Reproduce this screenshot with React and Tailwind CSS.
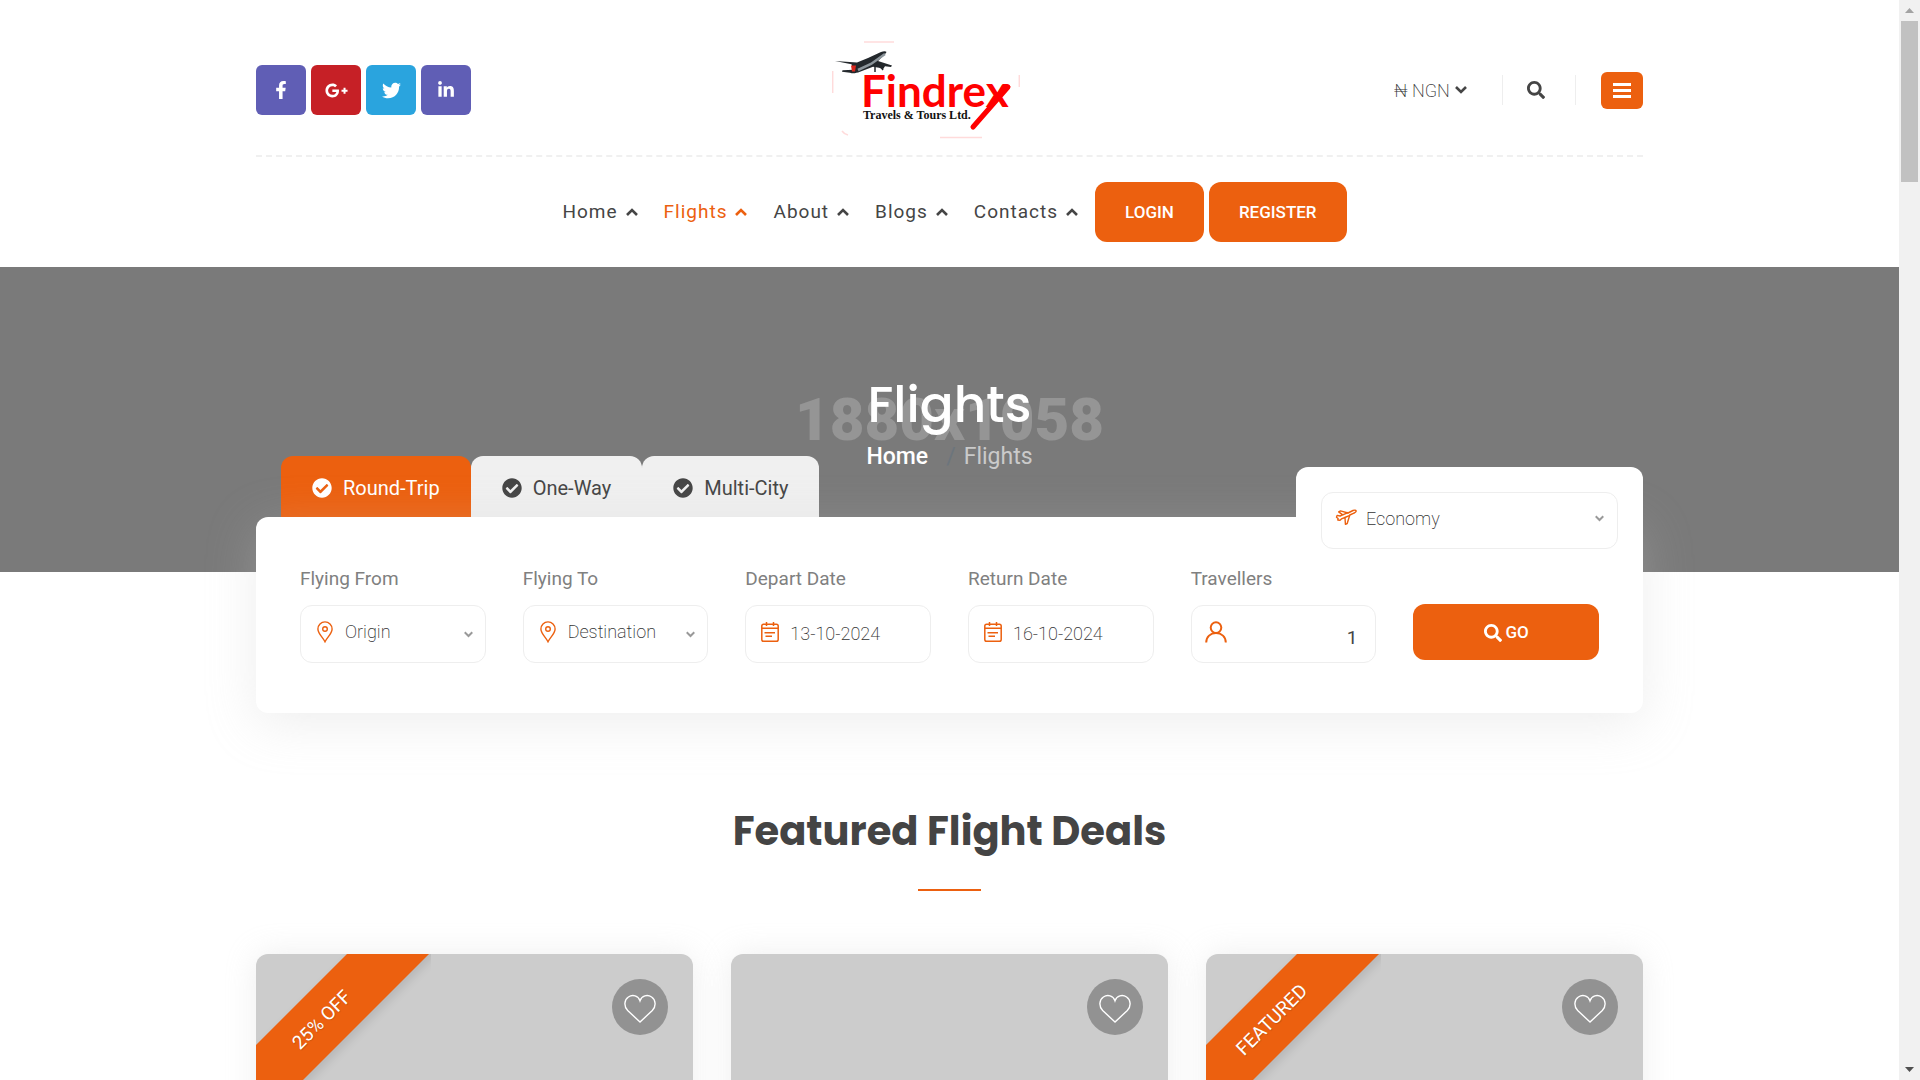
import { useState } from "react";
import {
  FaCheckCircle,
  FaFacebookF,
  FaGooglePlusG,
  FaLinkedinIn,
  FaSearch,
  FaTwitter,
} from "react-icons/fa";

const socials = [
  { label: "Facebook", Icon: FaFacebookF, color: "bg-[#605eb5]", size: 18 },
  { label: "Google Plus", Icon: FaGooglePlusG, color: "bg-[#c62026]", size: 23 },
  { label: "Twitter", Icon: FaTwitter, color: "bg-[#2aa4de]", size: 19 },
  { label: "LinkedIn", Icon: FaLinkedinIn, color: "bg-[#605eb5]", size: 18 },
];

const navItems = ["Home", "Flights", "About", "Blogs", "Contacts"];
const tripTypes = ["Round-Trip", "One-Way", "Multi-City"];

const deals = [
  { id: 1, ribbon: "25% OFF" },
  { id: 2, ribbon: null },
  { id: 3, ribbon: "FEATURED" },
];

function Chevron({ up, className }) {
  return (
    <svg
      viewBox="0 0 12 8"
      className={className}
      fill="none"
      stroke="currentColor"
      strokeWidth="2.6"
      aria-hidden="true"
    >
      <path d={up ? "M1 7 6 2l5 5" : "M1 1l5 5 5-5"} />
    </svg>
  );
}

function PinIcon() {
  return (
    <svg viewBox="0 0 16 22" className="h-[22px] w-4" fill="none" stroke="currentColor" strokeWidth="1.4" aria-hidden="true">
      <path d="M8 20.8C6 16.6.9 12.6.9 8a7.1 7.1 0 0 1 14.2 0c0 4.600-5.100 8.600-7.100 12.800z" />
      <circle cx="8" cy="8" r="2.300" />
    </svg>
  );
}

function CalendarIcon() {
  return (
    <svg viewBox="0 0 18 20" className="h-5 w-[18px]" fill="none" stroke="currentColor" strokeWidth="1.5" aria-hidden="true">
      <rect x=".8" y="2.200" width="16.400" height="17" rx="1.800" />
      <path d="M.8 6.200h16.400M5.500 0v4M12.500 0v4M3.500 10.800h10.500M4.500 14.200h6.500" />
    </svg>
  );
}

function PersonIcon() {
  return (
    <svg viewBox="0 0 22 22" className="h-[22px] w-[22px]" fill="none" stroke="currentColor" strokeWidth="2" aria-hidden="true">
      <circle cx="11" cy="6.600" r="5.300" />
      <path d="M1.200 21.500c0-5.600 4.300-9.500 9.800-9.500s9.800 3.900 9.800 9.500" />
    </svg>
  );
}

function PlaneIcon() {
  return (
    <svg viewBox="0 0 22 16" className="h-4 w-[22px]" fill="none" stroke="currentColor" strokeWidth="1.400" strokeLinejoin="round" aria-hidden="true">
      <path d="M1.500 8.200l.6-1.800 3 .6 2.600-1.100-4-3 1.800-1 7.500 2.100 5-2.500c1.500-.7 3.300-.3 3.200.8-.1 1-1.700 1.600-2.800 2.100l-3.600 1.600-2.600 8.500-1.800.8-.4-6.800-3.600 1.400-1.400 1.400-2.200-.3.300-1.500z" />
      <path d="M7.700 5.900l5.500-2.400M9.900 8.500l5-2.200" />
    </svg>
  );
}

function HeartIcon() {
  return (
    <svg viewBox="0 0 32 29" className="h-[29px] w-8" fill="none" stroke="currentColor" strokeWidth="1.400" aria-hidden="true">
      <path d="M16 28 3.700 16.600C-.4 12.300.2 5.800 4.400 3 8.600.2 14.300 1.600 16 6.800 17.700 1.600 23.400.2 27.600 3c4.200 2.800 4.800 9.300.7 13.600z" />
    </svg>
  );
}

function Logo() {
  return (
    <svg viewBox="0 0 188 98" className="h-[98px] w-[188px]" role="img" aria-label="Findrex Travels & Tours Ltd.">
      <path
        d="M32 1h30M.7 30v22M187.300 34v12M108 96.500h42M10 90q2 3 6 4"
        stroke="#ff0000"
        strokeOpacity=".14"
        strokeWidth="1.500"
        fill="none"
      />
      {/* aircraft */}
      <path d="M3 20l22 1.500 11-4.500 13-6c4-1.500 7-.5 4.500 1.500L46 20l14 4.500-1 1.500-6-.8-2 3-4-1.500-6-1-13 5c-4 1.500-7 2-10 1l-8-1 .5-1.500 11-.5-2-5.500z" fill="#23282c" />
      <path d="M26 29l13-6 14-10" stroke="#8c959b" strokeWidth="2.500" fill="none" />
      <path d="M19 24.500h5l-1 6h-3z" fill="#d8261c" />
      <path d="M43 26v5M49 26l2 3" stroke="#23282c" strokeWidth="1.500" />
      <text x="29" y="66" fill="#ff0000" fontSize="44" fontWeight="700" fontFamily="Lato, sans-serif">
        Findrex
      </text>
      <path d="M176 46 141 86" stroke="#ff0000" strokeWidth="5" strokeLinecap="round" />
      <text x="31" y="78" fill="#111111" fontSize="12" fontWeight="700" fontFamily="'Liberation Serif', serif">
        Travels &amp; Tours Ltd.
      </text>
    </svg>
  );
}

function Header() {
  return (
    <header className="mx-auto max-w-[1387px]">
      <div className="flex items-center justify-between border-b-2 border-dashed border-[#f0f0f0] pt-[41px] pb-4">
        <div className="flex flex-1 gap-[5px]">
          {socials.map(({ label, Icon, color, size }) => (
            <a
              key={label}
              href="#"
              aria-label={label}
              className={`flex size-[50px] items-center justify-center rounded-md text-white ${color}`}
            >
              <Icon size={size} />
            </a>
          ))}
        </div>

        <a href="#" className="-ml-12">
          <Logo />
        </a>

        <div className="flex flex-1 items-center justify-end">
          <div className="relative flex items-center">
            <select
              aria-label="Currency"
              className="appearance-none bg-transparent pt-0.5 pr-[17px] text-lg font-extralight text-[#333333] outline-none"
            >
              <option>₦ NGN</option>
            </select>
            <Chevron className="pointer-events-none absolute right-0 h-2 w-3" />
          </div>
          <span className="ml-[35px] h-[30px] w-px bg-[#eeeeee]" />
          <button type="button" aria-label="Search" className="mx-6">
            <FaSearch size={18} />
          </button>
          <span className="ml-1.5 h-[30px] w-px bg-[#eeeeee]" />
          <button
            type="button"
            aria-label="Open menu"
            className="ml-[25px] flex h-[37px] w-[42px] flex-col items-center justify-center gap-[3px] rounded-md bg-[#ec600f]"
          >
            <span className="h-[3px] w-[18px] bg-white" />
            <span className="h-[3px] w-[18px] bg-white" />
            <span className="h-[3px] w-[18px] bg-white" />
          </button>
        </div>
      </div>

      <nav className="flex items-center justify-center py-[25px] pl-2.5">
        <ul className="flex gap-[26px]">
          {navItems.map((item) => (
            <li key={item}>
              <a
                href="#"
                className={`flex items-center gap-2 text-[19px] tracking-[1px] ${
                  item === "Flights" ? "text-[#ec600f]" : "text-[#454545]"
                }`}
              >
                {item}
                <Chevron up className="h-2 w-3" />
              </a>
            </li>
          ))}
        </ul>
        <div className="ml-[17px] flex gap-[5px] text-[17px] font-medium text-white">
          <a href="#" className="flex h-[60px] items-center rounded-xl bg-[#ec600f] px-[30px] pt-0.5">
            LOGIN
          </a>
          <a href="#" className="flex h-[60px] items-center rounded-xl bg-[#ec600f] px-[30px] pt-0.5">
            REGISTER
          </a>
        </div>
      </nav>
    </header>
  );
}

function Hero() {
  return (
    <section className="relative flex h-[305px] flex-col items-center bg-[#7a7a7a] pt-[100px]">
      <span
        aria-hidden="true"
        className="absolute top-[118px] text-[60px] leading-[70px] font-black text-[#959595]"
      >
        1880x1058
      </span>
      <h1 className="relative font-[Poppins,Inter,sans-serif] text-[50px] leading-[75px] font-medium text-white">
        Flights
      </h1>
      <ol className="relative flex text-[23px] leading-[29px] font-medium">
        <li>
          <a href="#" className="text-white">
            Home
          </a>
        </li>
        <li aria-hidden="true" className="mr-2 ml-[18px] font-normal text-[#6c757d]">
          /
        </li>
        <li className="font-normal text-[#cacaca]">Flights</li>
      </ol>
    </section>
  );
}

function Field({ id, label, icon, children }) {
  return (
    <div>
      <label htmlFor={id} className="mb-[14px] block text-[19px] leading-6 text-[#808080]">
        {label}
      </label>
      <div className="relative flex h-[58px] items-center gap-[9px] rounded-xl border border-[#eeeeee] pr-3 pl-[13px]">
        <span className="flex w-[22px] shrink-0 justify-center pb-1 text-[#ec600f]">{icon}</span>
        {children}
      </div>
    </div>
  );
}

function PlaceSelect({ id, placeholder }) {
  return (
    <>
      <select
        id={id}
        className="min-w-0 flex-1 appearance-none bg-transparent pb-1 text-lg font-extralight text-[#333333] outline-none"
      >
        <option>{placeholder}</option>
      </select>
      <Chevron className="h-[7px] w-[9px] shrink-0 text-[#999999]" />
    </>
  );
}

function SearchPanel() {
  const [trip, setTrip] = useState("Round-Trip");
  const [depart, setDepart] = useState("13-10-2024");
  const [back, setBack] = useState("16-10-2024");
  const [travellers, setTravellers] = useState(1);

  return (
    <section className="relative mx-auto -mt-[116px] max-w-[1387px]">
      <div className="flex items-end justify-between">
        <div className="ml-[25px] flex">
          {tripTypes.map((type) => (
            <button
              key={type}
              type="button"
              onClick={() => setTrip(type)}
              className={`flex h-[61px] items-center gap-[11px] rounded-t-xl px-[31px] pt-0.5 text-xl ${
                trip === type ? "bg-[#ec600f] text-white" : "bg-[#f0f0f0] text-[#454545]"
              }`}
            >
              <FaCheckCircle size={20} />
              {type}
            </button>
          ))}
        </div>

        <div className="relative z-10 -mb-8 w-[347px] rounded-t-xl bg-white px-[25px] pt-[25px]">
          <div className="flex h-[57px] items-center gap-[9px] rounded-xl border border-[#eeeeee] pr-[13px] pb-1 pl-[13px]">
            <span className="pb-1 text-[#ec600f]">
              <PlaneIcon />
            </span>
            <select
              aria-label="Cabin class"
              className="min-w-0 flex-1 appearance-none bg-transparent text-lg font-extralight text-[#333333] outline-none"
            >
              <option>Economy</option>
              <option>Business</option>
            </select>
            <Chevron className="h-[7px] w-[9px] text-[#999999]" />
          </div>
        </div>
      </div>

      <form
        onSubmit={(e) => e.preventDefault()}
        className="relative grid grid-cols-6 gap-x-[37px] rounded-xl bg-white px-11 py-[50px] shadow-[0_10px_50px_rgba(200,200,200,0.3)]"
      >
        <Field id="from" label="Flying From" icon={<PinIcon />}>
          <PlaceSelect id="from" placeholder="Origin" />
        </Field>
        <Field id="to" label="Flying To" icon={<PinIcon />}>
          <PlaceSelect id="to" placeholder="Destination" />
        </Field>
        <Field id="depart" label="Depart Date" icon={<CalendarIcon />}>
          <input
            id="depart"
            type="text"
            className="w-full min-w-0 bg-transparent text-lg font-extralight text-[#333333] outline-none"
            value={depart}
            onChange={(e) => setDepart(e.target.value)}
          />
        </Field>
        <Field id="return" label="Return Date" icon={<CalendarIcon />}>
          <input
            id="return"
            type="text"
            className="w-full min-w-0 bg-transparent text-lg font-extralight text-[#333333] outline-none"
            value={back}
            onChange={(e) => setBack(e.target.value)}
          />
        </Field>
        <Field id="travellers" label="Travellers" icon={<PersonIcon />}>
          <input
            id="travellers"
            type="number"
            min="1"
            className="w-full min-w-0 bg-transparent pt-2 pr-1.5 text-right text-[19px] outline-none [&::-webkit-inner-spin-button]:appearance-none"
            value={travellers}
            onChange={(e) => setTravellers(e.target.value)}
          />
        </Field>
        <button
          type="submit"
          className="mt-[37px] flex h-14 items-center justify-center gap-1 rounded-xl bg-[#ec600f] pt-0.5 text-[17px] font-medium text-white"
        >
          <FaSearch size={18} />
          GO
        </button>
      </form>
    </section>
  );
}

function DealCard({ ribbon }) {
  return (
    <article className="relative h-[320px] overflow-hidden rounded-t-xl bg-[#cccccc] shadow-[0_0_30px_rgba(200,200,200,0.3)]">
      {ribbon && (
        <div className="absolute top-0 left-0 size-[175px] overflow-hidden">
          <span className="absolute top-[37px] -left-16 flex h-[58px] w-[260px] -rotate-45 items-center justify-center bg-[#ec600f] text-[19px] text-white shadow-[0_5px_10px_rgba(0,0,0,0.1)] [text-shadow:0_1px_1px_rgba(0,0,0,0.2)]">
            {ribbon}
          </span>
        </div>
      )}
      <button
        type="button"
        aria-label="Save deal"
        className="absolute top-[25px] right-[25px] flex size-14 items-center justify-center rounded-full bg-[#929292] pt-0.5 text-white"
      >
        <HeartIcon />
      </button>
    </article>
  );
}

function Scrollbar() {
  return (
    <div className="flex w-[21px] shrink-0 flex-col items-center bg-[#f1f1f1]" aria-hidden="true">
      <svg viewBox="0 0 21 21" className="h-[21px] w-[21px]" fill="#a3a3a3">
        <path d="M6 13h9l-4.500-5z" />
      </svg>
      <span className="h-[161px] w-[17px] bg-[#c1c1c1]" />
      <svg viewBox="0 0 21 21" className="mt-auto h-[21px] w-[21px]" fill="#505050">
        <path d="M6 8h9l-4.500 5z" />
      </svg>
    </div>
  );
}

export default function App() {
  return (
    <div className="flex h-screen overflow-hidden bg-white font-[Roboto,sans-serif] text-[#454545]">
      <div className="min-w-0 flex-1 overflow-hidden">
        <Header />
        <main>
          <Hero />
          <SearchPanel />
          <section className="mx-auto max-w-[1387px] pt-[88px]">
            <h2 className="text-center font-[Poppins,Inter,sans-serif] text-[40px] leading-[60px] font-bold text-[#444444]">
              Featured Flight Deals
            </h2>
            <div className="mx-auto mt-7 h-0.5 w-[63px] bg-[#ec600f]" />
            <div className="mt-[63px] grid grid-cols-3 gap-[38px]">
              {deals.map((deal) => (
                <DealCard key={deal.id} ribbon={deal.ribbon} />
              ))}
            </div>
          </section>
        </main>
      </div>
      <Scrollbar />
    </div>
  );
}
